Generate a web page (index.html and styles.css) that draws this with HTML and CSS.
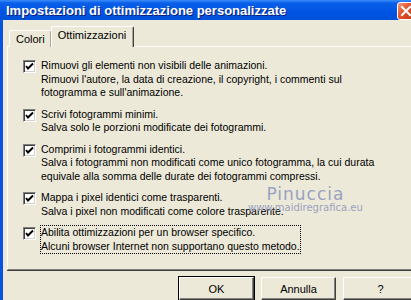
FILE: index.html
```html
<!DOCTYPE html>
<html lang="it">
<head>
    <meta charset="UTF-8">
    <title>Impostazioni di ottimizzazione personalizzate</title>
    <link rel="stylesheet" href="styles.css">
</head>
<body>
    <div class="window">
        <div class="titlebar">
            <span class="title">Impostazioni di ottimizzazione personalizzate</span>
            <span class="close">
                <svg width="14" height="14" viewBox="0 0 14 14">
                    <path d="M3 3 L11 11 M11 3 L3 11" stroke="#fff" stroke-width="2" stroke-linecap="square"/>
                </svg>
            </span>
        </div>

        <div class="client">
            <div class="tabs">
                <div class="tab">Colori</div>
                <div class="tab active">Ottimizzazioni</div>
            </div>

            <div class="panel">
                <div class="option">
                    <span class="check"><svg width="11" height="11" viewBox="0 0 11 11"><path d="M2 5 L4 7.5 L9 2.5" fill="none" stroke="#000" stroke-width="2"/></svg></span>
                    <p>Rimuovi gli elementi non visibili delle animazioni.<br>Rimuovi l'autore, la data di creazione, il copyright, i commenti sul<br>fotogramma e sull'animazione.</p>
                </div>
                <div class="option">
                    <span class="check"><svg width="11" height="11" viewBox="0 0 11 11"><path d="M2 5 L4 7.5 L9 2.5" fill="none" stroke="#000" stroke-width="2"/></svg></span>
                    <p>Scrivi fotogrammi minimi.<br>Salva solo le porzioni modificate dei fotogrammi.</p>
                </div>
                <div class="option">
                    <span class="check"><svg width="11" height="11" viewBox="0 0 11 11"><path d="M2 5 L4 7.5 L9 2.5" fill="none" stroke="#000" stroke-width="2"/></svg></span>
                    <p>Comprimi i fotogrammi identici.<br>Salva i fotogrammi non modificati come unico fotogramma, la cui durata<br>equivale alla somma delle durate dei fotogrammi compressi.</p>
                </div>
                <div class="option">
                    <span class="check"><svg width="11" height="11" viewBox="0 0 11 11"><path d="M2 5 L4 7.5 L9 2.5" fill="none" stroke="#000" stroke-width="2"/></svg></span>
                    <p>Mappa i pixel identici come trasparenti.<br>Salva i pixel non modificati come colore trasparente.</p>
                </div>
                <div class="option">
                    <span class="check"><svg width="11" height="11" viewBox="0 0 11 11"><path d="M2 5 L4 7.5 L9 2.5" fill="none" stroke="#000" stroke-width="2"/></svg></span>
                    <p class="focused">Abilita ottimizzazioni per un browser specifico.<br>Alcuni browser Internet non supportano questo metodo.</p>
                </div>

                <div class="watermark">
                    <span class="wm-name">Pinuccia</span>
                    <span class="wm-site">www.maidiregrafica.eu</span>
                </div>
            </div>

            <div class="buttons">
                <button class="default">OK</button>
                <button>Annulla</button>
                <button>?</button>
            </div>
        </div>
    </div>
</body>
</html>
```

FILE: styles.css
```css
* {
    margin: 0;
    padding: 0;
    box-sizing: border-box;
}

body {
    width: 411px;
    height: 300px;
    overflow: hidden;
    background: #ece9d8;
    font-family: 'Liberation Sans', Arial, sans-serif;
    font-size: 11px;
    color: #000;
}

.window {
    height: 300px;
    display: flex;
    flex-direction: column;
}

.titlebar {
    height: 20px;
    flex-shrink: 0;
    display: flex;
    align-items: center;
    justify-content: space-between;
    padding-left: 6px;
    background: linear-gradient(to bottom, #3a8cfa 0%, #0a5fe8 15%, #0054e3 60%, #0051d8 100%);
}

.title {
    color: #fff;
    font-weight: bold;
    font-size: 13px;
    text-shadow: 1px 1px 0 #0a1f78;
}

.close {
    width: 18px;
    height: 18px;
    margin-right: -4px;
    margin-top: 1px;
    display: flex;
    align-items: center;
    justify-content: center;
    background: linear-gradient(135deg, #f09a7f, #e0502a 45%, #c43a16);
    border: 1px solid #fff;
    border-radius: 3px;
}

.client {
    flex: 1;
    display: flex;
    flex-direction: column;
    border-left: 3px solid #0754e0;
    padding: 7px 0 0 4px;
}

.tabs {
    display: flex;
    align-items: flex-end;
    height: 20px;
    padding-left: 2px;
    margin-bottom: -1px;
    position: relative;
    z-index: 1;
}

.tab {
    height: 17px;
    padding: 2px 6px 0 6px;
    border: 1px solid #fff;
    border-right: 1px solid #808080;
    border-bottom: none;
    box-shadow: inset -1px 0 0 #aca899;
    border-radius: 2px 2px 0 0;
    background: #ece9d8;
}

.tab.active {
    height: 21px;
    padding: 2px 7px 0 6px;
    margin-left: -1px;
    border-right: 1px solid #404040;
}

.panel {
    height: 224px;
    border: 1px solid #fff;
    border-right: none;
    border-bottom: 1px solid #808080;
    box-shadow: 0 1px 0 #404040;
    padding: 12px 0 0 15px;
    position: relative;
}

.option {
    display: flex;
    gap: 5px;
    margin-bottom: 8px;
}

.option p {
    font-size: 10.5px;
    line-height: 13.5px;
}

.check {
    width: 13px;
    height: 13px;
    margin-top: 1px;
    flex-shrink: 0;
    display: flex;
    align-items: center;
    justify-content: center;
    background: #fff;
    border: 1px solid #808080;
    border-right-color: #fff;
    border-bottom-color: #fff;
    box-shadow: inset 1px 1px 0 #404040, inset -1px -1px 0 #d4d0c8;
}

.focused {
    outline: 1px dotted #000;
    outline-offset: 0;
}

.watermark {
    position: absolute;
    left: 240px;
    top: 139px;
    display: flex;
    flex-direction: column;
    align-items: center;
    color: #9aa2c2;
    font-family: 'DejaVu Sans', sans-serif;
    line-height: 1;
    pointer-events: none;
}

.wm-name {
    font-size: 17px;
    letter-spacing: 1px;
}

.wm-site {
    font-size: 10px;
}

.buttons {
    display: flex;
    gap: 7px;
    padding: 7px 0 0 172px;
}

button {
    width: 75px;
    height: 23px;
    flex-shrink: 0;
    background: #ece9d8;
    font-family: 'Liberation Sans', Arial, sans-serif;
    font-size: 11px;
    color: #000;
    border: 1px solid #fff;
    border-right-color: #404040;
    border-bottom-color: #404040;
    box-shadow: inset -1px -1px 0 #808080;
}

button.default {
    outline: 1px solid #000;
    outline-offset: 0;
}
```
